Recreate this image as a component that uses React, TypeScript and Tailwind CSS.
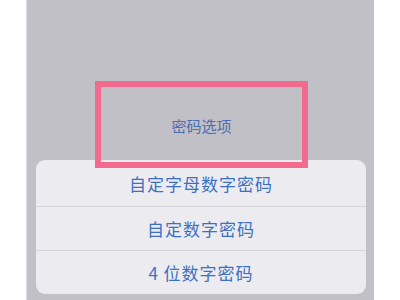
export default function App() {
  const options = ['自定字母数字密码', '自定数字密码', '4 位数字密码'];
  return (
    <div className="w-[400px] h-[300px] bg-white flex overflow-hidden" style={{ fontFamily: '"Noto Sans CJK SC", "Noto Sans", sans-serif' }}>
      <div className="ml-[26px] w-[348px] h-full bg-[#c1c0c6] border-l border-[#dcdce0] flex flex-col pt-[81px]">
        <div className="relative z-10 ml-[68px] w-[213px] h-[87px] border-[6px] border-[#f26a8d] flex items-center justify-center">
          <span className="text-[15px] text-[#4a6cb3] leading-none mt-[1px]">密码选项</span>
        </div>
        <div className="mt-[-8px] ml-[9px] mr-[8px] h-[134px] bg-[#ececf0] rounded-[9px] flex flex-col">
          {options.map((o, i) => (
            <div
              key={o}
              className={`flex items-center justify-center text-[17px] text-[#3d70c2] tracking-[1px] ${i === 0 ? 'h-[46px] pt-[2px]' : 'h-[44px] border-t border-[#d6d6da]'}`}
            >
              {o}
            </div>
          ))}
        </div>
      </div>
    </div>
  );
}
